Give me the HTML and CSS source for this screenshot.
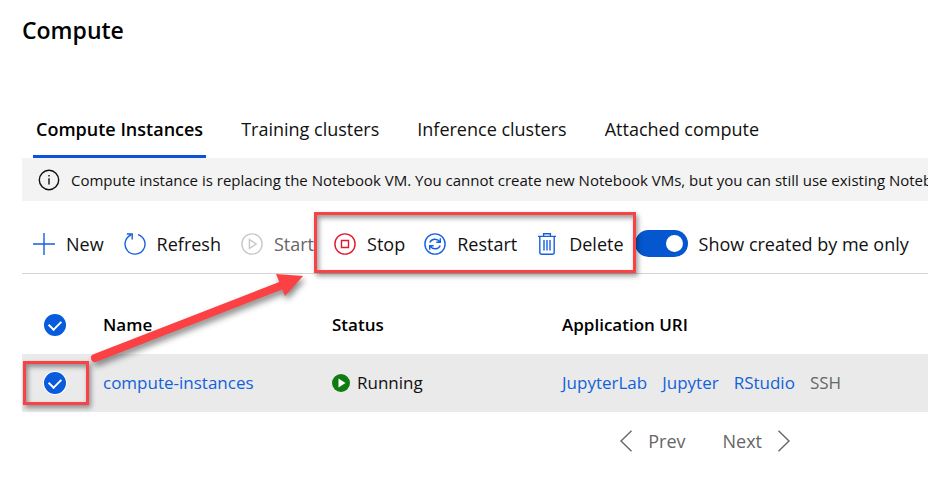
FILE: index.html
```html
<!DOCTYPE html>
<html lang="en">
<head>
<meta charset="utf-8">
<title>Compute</title>
<link rel="stylesheet" href="styles.css">
</head>
<body>
<main class="page">
  <h1 class="title">Compute</h1>
  <nav class="tabs">
    <a class="tab active" href="#instances">Compute Instances</a>
    <a class="tab" href="#training">Training clusters</a>
    <a class="tab" href="#inference">Inference clusters</a>
    <a class="tab" href="#attached">Attached compute</a>
  </nav>
  <div class="banner">
    <svg class="icon" viewBox="0 0 22 22"><circle cx="11" cy="11" r="9.7"/><path d="M11 9.2v6.3M11 6v1.6"/></svg>
    <p class="message">Compute instance is replacing the Notebook VM. You cannot create new Notebook VMs, but you can still use existing Notebook VMs.</p>
  </div>
  <div class="toolbar">
    <button class="command" type="button"><svg class="icon blue" viewBox="0 0 22 22"><path d="M11 0v22M0 11h22"/></svg>New</button>
    <button class="command" type="button"><svg class="icon blue" viewBox="0 0 22 22"><path d="M14 1.6A10 10 0 1 1 7 2M2.8 1h5.4v5.4"/></svg>Refresh</button>
    <button class="command" type="button" disabled><svg class="icon" viewBox="0 0 22 22"><circle cx="11" cy="11" r="10.1"/><path d="M8.4 6.6v8.8l6.8-4.4z"/></svg>Start</button>
    <div class="group">
      <button class="command" type="button"><svg class="icon red" viewBox="0 0 22 22"><circle cx="11" cy="11" r="10.1"/><path d="M7.5 7.5h7v7h-7z"/></svg>Stop</button>
      <button class="command" type="button"><svg class="icon blue" viewBox="0 0 22 22"><circle cx="11" cy="11" r="10.1"/><path d="M5.8 9.6C7.2 5.8 12.8 4.8 15.8 8.7M16.3 5.2v4h-4M16.2 12.4C14.8 16.2 9.2 17.2 6.2 13.3M5.7 16.8v-4h4"/></svg>Restart</button>
      <button class="command" type="button"><svg class="icon blue" viewBox="0 0 22 22"><path d="M2 3.4h18M7.6 3.4V.8h6.8v2.6M3.8 3.4v15.8q0 2 2 2h10.4q2 0 2-2V3.4M8 7v10.5M11 7v10.5M14 7v10.5"/></svg>Delete</button>
    </div>
    <label class="filter"><input class="toggle" type="checkbox" role="switch" checked>Show created by me only</label>
  </div>
  <div class="listing">
    <table class="instances">
      <thead>
        <tr>
          <th class="pick"><input class="check" type="checkbox" aria-label="Select all" checked></th>
          <th class="name">Name</th>
          <th class="status">Status</th>
          <th>Application URI</th>
        </tr>
      </thead>
      <tbody>
        <tr>
          <td class="pick marked"><input class="check" type="checkbox" aria-label="Select compute-instances" checked></td>
          <td><a class="link" href="#compute-instances">compute-instances</a></td>
          <td><span class="state"><svg class="running" viewBox="0 0 18 18"><circle cx="9" cy="9" r="9"/><path d="M6.5 4.5v9l7-4.5z"/></svg>Running</span></td>
          <td><span class="apps"><a class="link" href="#lab">JupyterLab</a><a class="link" href="#jupyter">Jupyter</a><a class="link" href="#rstudio">RStudio</a><span class="muted">SSH</span></span></td>
        </tr>
      </tbody>
    </table>
    <svg class="arrow" viewBox="0 0 240 110" aria-hidden="true"><path d="M73 84 L258 12"/><polygon points="254,0 281,2 263,22"/></svg>
  </div>
  <div class="pager">
    <button class="page-link" type="button"><svg class="chevron" viewBox="0 0 12 22"><path d="M11.5 .8L1 11l10.500 10.200"/></svg>Prev</button>
    <button class="page-link" type="button">Next<svg class="chevron" viewBox="0 0 12 22"><path d="M.5 .8L11 11 .5 21.200"/></svg></button>
  </div>
</main>
</body>
</html>
```
FILE: styles.css
```css
* { box-sizing: border-box; }

body {
  margin: 0;
  background: #fff;
  color: #111;
  font: 18px/24px "Open Sans", "Noto Sans", sans-serif;
  overflow-x: hidden;
}

button {
  padding: 0;
  border: 0;
  background: none;
  color: inherit;
  font: inherit;
}

a { text-decoration: none; }

.page { padding: 14px 0 24px 22px; }

.title {
  margin: 0;
  color: #000;
  font-size: 23px;
  font-weight: 600;
  line-height: 32px;
}

.tabs {
  display: flex;
  gap: 32px;
  padding: 64px 0 0 11px;
}

.tab {
  padding: 7px 3px 14px;
  border-bottom: 3px solid transparent;
  color: #111;
  white-space: nowrap;
}

.tab.active {
  border-color: #0b53d9;
  color: #000;
  font-weight: 600;
}

.banner {
  display: flex;
  align-items: center;
  gap: 11px;
  height: 43px;
  padding-left: 16px;
  overflow: hidden;
  background: #f3f3f3;
  font-size: 15px;
}

.message {
  margin: 0;
  white-space: nowrap;
}

.icon {
  flex: none;
  width: 22px;
  height: 22px;
  fill: none;
  stroke: currentColor;
  stroke-width: 1.4;
}

.blue { color: #1560e0; }
.red { color: #e3182d; }

.toolbar {
  display: flex;
  align-items: center;
  height: 73px;
  padding: 13px 0 0 11px;
  border-bottom: 1px solid #d4d4d4;
  gap: 20px;
}

.command {
  display: flex;
  flex: none;
  align-items: center;
  gap: 11px;
}

.command:disabled { color: #666; }
.command:disabled .icon { color: #c8c8c8; }

.group {
  position: relative;
  display: flex;
  flex: none;
  gap: 19px;
}

.group::before,
.marked::before {
  content: "";
  position: absolute;
  z-index: 1;
  border: 3px solid #fb4143;
  box-shadow: 2px 3px 5px #0006, inset 2px 3px 5px #0006;
  pointer-events: none;
}

.group::before { inset: -20px -12px -17px -20px; }

.filter {
  display: flex;
  flex: none;
  align-items: center;
  gap: 11px;
  margin-left: -9px;
}

.toggle {
  appearance: none;
  display: flex;
  justify-content: flex-end;
  width: 53px;
  height: 27px;
  margin: 0;
  padding: 5px;
  border-radius: 14px;
  background: #0557cf;
}

.toggle::after {
  content: "";
  width: 17px;
  height: 17px;
  border-radius: 50%;
  background: #fff;
}

.listing { position: relative; }

.instances {
  width: 100%;
  border-collapse: collapse;
  table-layout: fixed;
  font-size: 17px;
}

.instances th {
  height: 80px;
  padding: 22px 0 0;
  color: #000;
  font-weight: 600;
  text-align: left;
}

.instances td {
  height: 58px;
  padding: 0;
  background: #eaeaea;
}

.instances .pick {
  width: 81px;
  padding-left: 22px;
}

.name { width: 229px; }
.status { width: 230px; }

.marked { position: relative; }
.marked::before { inset: 7px 14px 7px 1px; }

.check {
  appearance: none;
  display: grid;
  place-items: center;
  width: 22px;
  height: 22px;
  margin: 0;
  border-radius: 50%;
  background: #075bdc;
}

.marked .check { box-shadow: 0 0 0 1px #fff; }

.check::after {
  content: "";
  width: 10px;
  height: 6px;
  margin-bottom: 3px;
  border: solid #fff;
  border-width: 0 0 2px 2px;
  transform: rotate(-45deg);
}

.link { color: #1261dc; }
.muted { color: #666; }

.state {
  display: flex;
  align-items: center;
  gap: 7px;
}

.running {
  width: 18px;
  height: 18px;
  fill: #107c10;
}

.running path { fill: #fff; }

.apps {
  display: flex;
  gap: 15px;
}

.arrow {
  position: absolute;
  top: 0;
  left: 0;
  width: 240px;
  height: 110px;
  overflow: visible;
  fill: #fb4143;
  filter: drop-shadow(2px 4px 3px #0007);
  pointer-events: none;
}

.arrow path {
  stroke: #fb4143;
  stroke-width: 8;
  stroke-linecap: round;
}

.pager {
  display: flex;
  justify-content: flex-end;
  gap: 37px;
  padding: 17px 138px 0 0;
  color: #666;
}

.page-link {
  display: flex;
  align-items: center;
  gap: 16px;
}

.chevron {
  width: 12px;
  height: 22px;
  fill: none;
  stroke: currentColor;
  stroke-width: 1.4;
}
```
